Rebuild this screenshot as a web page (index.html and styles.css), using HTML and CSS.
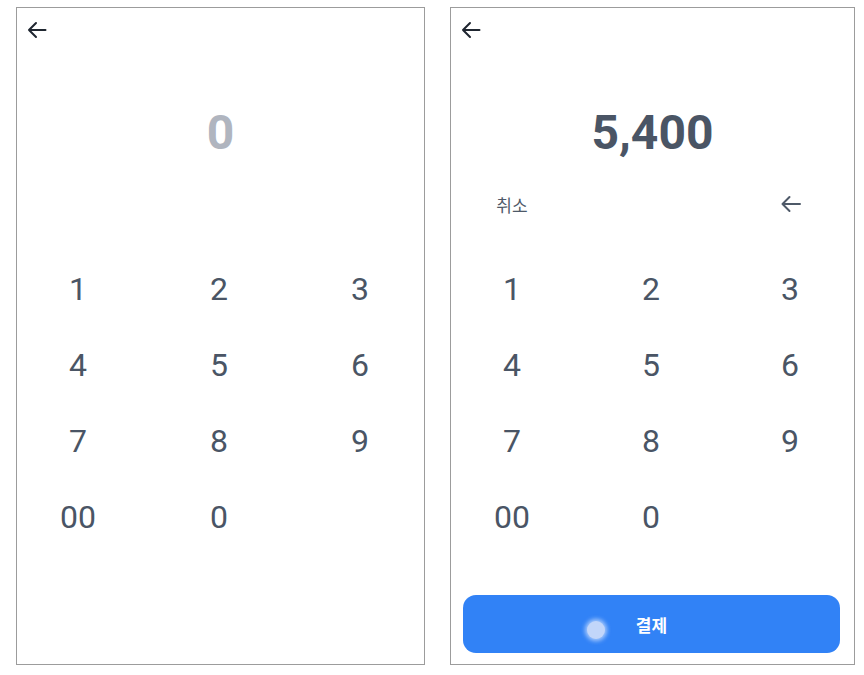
FILE: index.html
```html
<!DOCTYPE html>
<html lang="ko">
<head>
<meta charset="utf-8">
<title>Keypad</title>
<link rel="stylesheet" href="styles.css">
</head>
<body>
<div class="screens">
  <section class="phone">
    <header class="topbar">
      <button class="icon-btn" aria-label="뒤로">
        <svg width="20" height="18" viewBox="0 0 20 18"><path d="M18.5 9H2 M9 2 2 9 9 16" fill="none" stroke="#1f2630" stroke-width="2" stroke-linecap="round" stroke-linejoin="round"/></svg>
      </button>
    </header>
    <div class="amount amount--empty">0</div>
    <div class="actions actions--hidden">
      <span class="cancel">취소</span>
      <span></span>
      <span class="backspace">
        <svg width="22" height="18" viewBox="0 0 22 18"><path d="M20 9H2.5 M9.5 2 2.5 9 9.5 16" fill="none" stroke="#4e5968" stroke-width="2" stroke-linecap="round" stroke-linejoin="round"/></svg>
      </span>
    </div>
    <div class="keypad">
      <span class="key">1</span><span class="key">2</span><span class="key">3</span>
      <span class="key">4</span><span class="key">5</span><span class="key">6</span>
      <span class="key">7</span><span class="key">8</span><span class="key">9</span>
      <span class="key">00</span><span class="key">0</span><span class="key"></span>
    </div>
  </section>

  <section class="phone phone--narrow">
    <header class="topbar">
      <button class="icon-btn" aria-label="뒤로">
        <svg width="20" height="18" viewBox="0 0 20 18"><path d="M18.5 9H2 M9 2 2 9 9 16" fill="none" stroke="#1f2630" stroke-width="2" stroke-linecap="round" stroke-linejoin="round"/></svg>
      </button>
    </header>
    <div class="amount">5,400</div>
    <div class="actions">
      <span class="cancel">취소</span>
      <span></span>
      <span class="backspace">
        <svg width="22" height="18" viewBox="0 0 22 18"><path d="M20 9H2.5 M9.5 2 2.5 9 9.5 16" fill="none" stroke="#4e5968" stroke-width="2" stroke-linecap="round" stroke-linejoin="round"/></svg>
      </span>
    </div>
    <div class="keypad">
      <span class="key">1</span><span class="key">2</span><span class="key">3</span>
      <span class="key">4</span><span class="key">5</span><span class="key">6</span>
      <span class="key">7</span><span class="key">8</span><span class="key">9</span>
      <span class="key">00</span><span class="key">0</span><span class="key"></span>
    </div>
    <div class="spacer"></div>
    <button class="pay-btn">
      <span class="touch-dot"></span>
      결제
    </button>
  </section>
</div>
</body>
</html>
```
FILE: styles.css
```css
* { box-sizing: border-box; }

body {
  margin: 0;
  background: #ffffff;
  font-family: Roboto, "Noto Sans CJK KR", sans-serif;
}

.screens {
  display: flex;
  gap: 25px;
  padding: 7px 0 0 16px;
}

.phone {
  width: 409px;
  height: 658px;
  border: 1px solid #9c9c9c;
  background: #fff;
  display: flex;
  flex-direction: column;
}

.phone--narrow {
  width: 405px;
}

.topbar {
  height: 44px;
  display: flex;
  align-items: center;
  padding-left: 9px;
}

.icon-btn {
  border: 0;
  background: none;
  padding: 0;
  width: 22px;
  height: 22px;
  display: flex;
  align-items: center;
  justify-content: center;
}

.amount {
  margin-top: 53px;
  height: 56px;
  line-height: 56px;
  text-align: center;
  font-size: 48px;
  font-weight: 700;
  color: #4a5565;
}

.amount--empty {
  color: #b0b5bf;
}

.actions,
.keypad {
  display: grid;
  grid-template-columns: repeat(3, 80px);
  justify-content: space-between;
  padding: 0 24px 0 21px;
}

.actions {
  margin-top: 19px;
  height: 48px;
  align-items: center;
}

.actions--hidden {
  visibility: hidden;
}

.cancel {
  text-align: center;
  font-family: "Noto Sans CJK KR", sans-serif;
  font-size: 17px;
  color: #4e5968;
}

.backspace {
  display: flex;
  justify-content: center;
  align-items: center;
  padding-left: 2px;
}

.keypad {
  margin-top: 23px;
  grid-auto-rows: 76px;
}

.key {
  display: flex;
  align-items: center;
  justify-content: center;
  font-size: 32px;
  font-weight: 400;
  color: #4a5565;
}

.spacer {
  flex: 1;
}

.pay-btn {
  position: relative;
  margin: 0 14px 11px 12px;
  height: 58px;
  border: 0;
  border-radius: 13px;
  background: #3182f6;
  color: #ffffff;
  font-family: "Noto Sans CJK KR", sans-serif;
  font-size: 17px;
  font-weight: 700;
}

.touch-dot {
  position: absolute;
  left: 124px;
  top: 26px;
  width: 18px;
  height: 18px;
  border-radius: 50%;
  background: #c2d6fa;
  box-shadow: 0 0 4px 2px rgba(220, 232, 255, 0.7);
}
```
